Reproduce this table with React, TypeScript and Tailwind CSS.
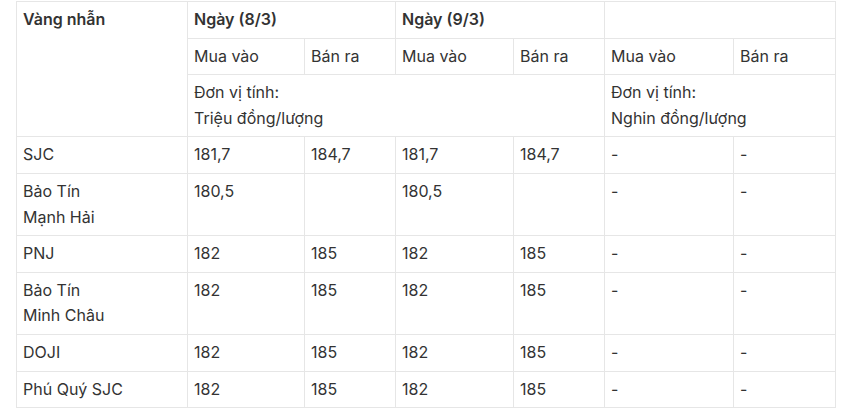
const rows: { name: string[]; v: string[] }[] = [
  { name: ["SJC"], v: ["181,7", "184,7", "181,7", "184,7", "-", "-"] },
  { name: ["Bảo Tín", "Mạnh Hải"], v: ["180,5", "", "180,5", "", "-", "-"] },
  { name: ["PNJ"], v: ["182", "185", "182", "185", "-", "-"] },
  { name: ["Bảo Tín", "Minh Châu"], v: ["182", "185", "182", "185", "-", "-"] },
  { name: ["DOJI"], v: ["182", "185", "182", "185", "-", "-"] },
  { name: ["Phú Quý SJC"], v: ["182", "185", "182", "185", "-", "-"] },
];

const cell = "border border-[#e6e6e6] align-top pl-[6px] pr-2 py-[5px]";

export default function App() {
  return (
    <div className="min-h-screen w-full bg-white pt-px pl-4" style={{ fontFamily: "Inter, Roboto, 'Liberation Sans', sans-serif" }}>
      <table className="w-[819px] table-fixed border-collapse text-[16px] leading-[1.6] text-[#333333]">
        <colgroup>
          <col className="w-[171px]" />
          <col className="w-[117px]" />
          <col className="w-[91px]" />
          <col className="w-[118px]" />
          <col className="w-[91px]" />
          <col className="w-[129px]" />
          <col className="w-[102px]" />
        </colgroup>
        <tbody>
          <tr>
            <td rowSpan={3} className={`${cell} font-semibold`}>Vàng nhẫn</td>
            <td colSpan={2} className={`${cell} font-semibold`}>Ngày (8/3)</td>
            <td colSpan={2} className={`${cell} font-semibold`}>Ngày (9/3)</td>
            <td colSpan={2} className={cell}></td>
          </tr>
          <tr>
            <td className={cell}>Mua vào</td>
            <td className={cell}>Bán ra</td>
            <td className={cell}>Mua vào</td>
            <td className={cell}>Bán ra</td>
            <td className={cell}>Mua vào</td>
            <td className={cell}>Bán ra</td>
          </tr>
          <tr>
            <td colSpan={4} className={cell}>
              Đơn vị tính:
              <br />
              Triệu đồng/lượng
            </td>
            <td colSpan={2} className={cell}>
              Đơn vị tính:
              <br />
              Nghin đồng/lượng
            </td>
          </tr>
          {rows.map((r, i) => (
            <tr key={i}>
              <td className={cell}>
                {r.name.map((n, j) => (
                  <div key={j}>{n}</div>
                ))}
              </td>
              {r.v.map((v, j) => (
                <td key={j} className={cell}>
                  {v}
                </td>
              ))}
            </tr>
          ))}
        </tbody>
      </table>
    </div>
  );
}
